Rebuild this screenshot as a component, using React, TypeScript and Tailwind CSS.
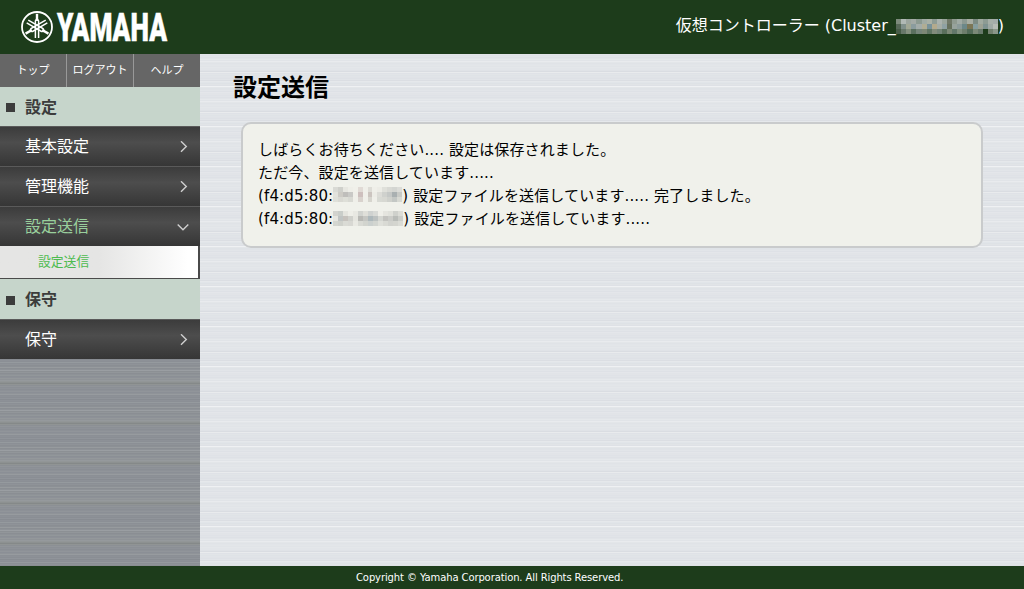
import { clsx } from "clsx";

// One colour per pixel row; both textures repeat every 40px.
const lightRows =
  "e2e4e8 dfe2e7 e1e4e8 dee1e6 e1e4e8 e5e8eb e1e4e8 e9ebee e3e6e9 e0e3e7 e2e5e9 e3e6e9 e1e4e8 e4e7ea e2e5e9 e2e5e9 e0e3e7 dadde2 e9ebed dfe2e7 e2e5e8 dfe3e7 e1e4e8 e0e3e7 dee1e6 e1e4e8 dbdee3 e5e8eb e1e5e9 dee2e6 e1e4e7 dee1e6 eff1f3 e3e6e9 dfe3e7 e0e3e7 e2e5e9 dee1e6 e4e6ea e1e4e8".split(" ");
const darkRows =
  "8e9297 92979a 8b8f95 8d9197 94989b 8f9397 95999c 929697 8d9191 858989 909494 8b8f94 919599 8b8f95 8e9298 8a8e94 8d9197 91959a 8b8f96 8f9398 979b9f 8b8f95 8d9197 8a8e94 90949a 888c92 8d9197 8b8f95 959a9e 8b8f95 8f9398 8a8e93 8c9095 979b9e 8a8e93 8e9297 9a9ea2 8c9094 92969a 8a8e93".split(" ");

function stripes(rows: string[]) {
  const stops = rows.map((color, i) => `#${color} ${i}px ${i + 1}px`).join(",");
  return { backgroundImage: `repeating-linear-gradient(to bottom,${stops})` };
}

function Mosaic({ rows, cell, className }: { rows: string[]; cell: number; className: string }) {
  const cells = rows.map((row) => row.split(" "));
  return (
    <svg
      className={className}
      viewBox={`0 0 ${cells[0].length * cell} ${cells.length * cell}`}
      preserveAspectRatio="none"
      shapeRendering="crispEdges"
    >
      {cells.map((row, y) =>
        row.map((fill, x) => (
          <rect key={`${x}-${y}`} x={x * cell} y={y * cell} width={cell} height={cell} fill={`#${fill}`} />
        )),
      )}
    </svg>
  );
}

const clusterMask = [
  "7d8b7c b0b9b5 9ba59e a3aaa5 8c9a91 a0aba4 a9b0a5 8e9c95 aab2ae 9aa59c 6f7767 8f9a90 a0aaa4 8c9991 a7ada3 7c8b83 a0aaa0 8d9b93 a6afa8 a4aca9",
  "566857 7f908b a1a895 8b9c9e a3aca9 b0ad94 78929a b3aa8d a5ada6 8fa1a3 66705c 97a29c 8c9b9a 6c8889 7b7656 869e9f 9ca193 7f9391 9fa9a5 b6bcb5",
  "475c48 68786a 84907f 5b705f 76857a 7d8876 617664 828c7c 748578 5a6f5c 7c8876 63776a 81907f 6e7e6c 536b58 7b8977 67796a 1d3c1b 72806f 8a9689",
];
const macMaskA = [
  "d9dad5 cfd0cb e7e7e1 eeeee8 f0f0ea e0dad5 efefe9 dddcd6 efefe9 ecece6 dfe0da d8d9d4 d3d5d1 dbdcd8",
  "e2e2dc cdcbc5 bfbebb c9c9c6 efefe9 cdbfbd efefe9 cbc4bf ecece6 dcdcd7 cfd1cd c5c8c6 a9b0b1 c8cac6",
  "dfe0d9 d9d9d3 dedfd8 d8d9d3 efefe9 d8d2cd efefe9 d6d5ce efefe9 d8dad4 d7d8d2 cfd1cc c3c7c4 d7d9d3",
];
const macMaskB = [
  "d2d3ce c9cdc9 e4e4de eeeee8 e8e8e2 d1d3cf dfdfd9 cfd2d0 d8dad6 efefe9 e5e5df e0e1db cfd1cc dcddd7",
  "e6e6e0 c0c4c3 c6c2bd cfd0cb e5e5df b8b8b4 c5c6c2 adb8bb bcc1c0 d4d6d1 c3c3bf cbccc8 b9bcb8 cccec9",
  "d4d6d0 cfd1cb dadbd5 d8d8d3 e9e9e3 d9dad4 d2d4ce cbd0ce d2d5d0 dfe0da d9dad4 d2d3ce d4d5cf dbdcd6",
];

function Logo() {
  return (
    <svg className="ml-5 h-[54px] w-[160px] overflow-visible" viewBox="0 -9 160 54" fill="none">
      <circle cx="17" cy="18" r="15" stroke="white" strokeWidth="1.8" />
      {[0, 120, 240].map((angle) => (
        <g key={angle} transform={`rotate(${angle} 17 18)`} stroke="white">
          <path d="M17 4.8V12" strokeWidth="2.4" />
          <path d="M15.4 29V12L17 9.5L18.6 12V29" strokeWidth="1.5" />
        </g>
      ))}
      <text
        x="37"
        y="31.8"
        fill="white"
        stroke="white"
        strokeWidth="0.5"
        textLength="110"
        lengthAdjust="spacingAndGlyphs"
        className="font-['Roboto'] text-[38.5px] font-black"
      >
        YAMAHA
      </text>
    </svg>
  );
}

function SectionTitle({ title, className }: { title: string; className: string }) {
  return (
    <div className={clsx("flex items-center bg-[#c6d5cb] pl-1.5 text-[#3c3c3c]", className)}>
      <span className="mt-0.5 size-[9px] bg-[#3c3c3c]" />
      <h2 className="mt-0.5 ml-[10px] text-[16px] leading-none font-bold">{title}</h2>
    </div>
  );
}

function MenuItem({ label, open = false }: { label: string; open?: boolean }) {
  return (
    <div className="flex h-10 items-center justify-between border-t border-[#5a5a5a] bg-linear-to-b from-[#3c3c3c] via-[#4d4d4d] via-40% to-[#363636] pr-[11px] pl-[25px]">
      <span className={clsx("mt-px text-[16px] leading-none", open ? "text-[#99cf9c]" : "text-white")}>{label}</span>
      <svg className="size-3" viewBox="0 0 12 12" fill="none" stroke="#d0d0d0" strokeWidth="1.4">
        {open ? <path d="M0.7 3.5L6 8.7L11.3 3.5" /> : <path d="M4 0.3L9.3 5.5L4 10.7" />}
      </svg>
    </div>
  );
}

function Sidebar() {
  return (
    <aside className="w-[200px] shrink-0" style={stripes(darkRows)}>
      <nav className="flex h-[33px] bg-[#666] text-[11px] text-white">
        <a className="flex w-[67px] items-center justify-center border-r border-[#999] pt-0.5">トップ</a>
        <a className="flex w-[67px] items-center justify-center border-r border-[#999] pt-0.5">ログアウト</a>
        <a className="flex w-[66px] items-center justify-center pt-0.5">ヘルプ</a>
      </nav>
      <SectionTitle title="設定" className="h-[39px]" />
      <MenuItem label="基本設定" />
      <MenuItem label="管理機能" />
      <MenuItem label="設定送信" open />
      <div className="flex h-[33px] items-center border-r-2 border-b border-[#4a4a4a] bg-linear-to-r from-[#e5e5e4] from-50% to-white to-95% pb-px pl-[38px] text-[12.8px] text-[#4dbb50]">
        設定送信
      </div>
      <SectionTitle title="保守" className="h-10" />
      <MenuItem label="保守" />
    </aside>
  );
}

export default function App() {
  return (
    <div className="flex h-[589px] w-[1024px] flex-col overflow-hidden font-['DejaVu_Sans','Noto_Sans_CJK_JP',sans-serif]">
      <header className="flex h-[54px] shrink-0 items-center justify-between bg-[#1d3c1b]">
        <Logo />
        <div className="mr-5 flex items-center pb-0.5 text-[16px] leading-none whitespace-pre text-white">
          <span>仮想コントローラー (Cluster_</span>
          <Mosaic rows={clusterMask} cell={5} className="h-[15px] w-[102px]" />
          <span>)</span>
        </div>
      </header>
      <div className="flex min-h-0 flex-1">
        <Sidebar />
        <main className="flex-1" style={stripes(lightRows)}>
          <h1 className="mt-[22px] ml-[33px] text-[24px] leading-6 font-bold text-black">設定送信</h1>
          <section className="mt-[22px] ml-[41px] h-[126px] w-[742px] rounded-[10px] border-2 border-[#c9cbcc] bg-[#f0f1eb] px-[15px] py-[15px] text-[15px] leading-[23px] tracking-[0.13px] whitespace-pre text-black">
            <p className="h-[23px]">しばらくお待ちください.... 設定は保存されました。</p>
            <p className="h-[23px]">ただ今、設定を送信しています.....</p>
            <p className="flex h-[23px] items-center">
              (f4:d5:80:
              <Mosaic rows={macMaskA} cell={5} className="mb-1 h-[15px] w-[69px]" />
              ) 設定ファイルを送信しています..... 完了しました。
            </p>
            <p className="flex h-[23px] items-center">
              (f4:d5:80:
              <Mosaic rows={macMaskB} cell={5} className="mb-0.5 h-[15px] w-[70px]" />
              ) 設定ファイルを送信しています.....
            </p>
          </section>
        </main>
      </div>
      <footer className="flex h-[23px] shrink-0 items-center bg-[#1d3c1b] pl-[356px] text-[10px] tracking-[-0.11px] text-white">
        Copyright © Yamaha Corporation. All Rights Reserved.
      </footer>
    </div>
  );
}
